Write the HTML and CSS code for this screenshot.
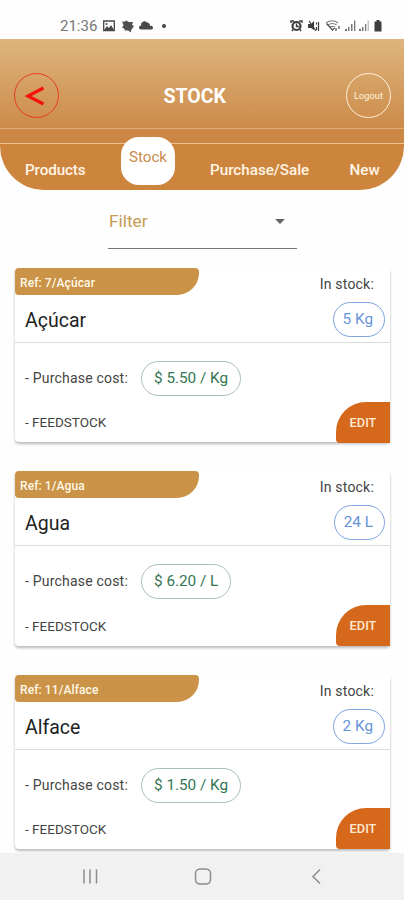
FILE: index.html
```
<!DOCTYPE html>
<html lang="en">
<head>
<meta charset="utf-8">
<title>Stock</title>
<link rel="stylesheet" href="styles.css">
</head>
<body>
<div class="status">
  <span class="time">21:36</span>
  <svg class="notif" width="56" height="14" viewBox="0 0 56 14">
    <path d="M1.700 2h10.600v9.600H1.700z" fill="none" stroke="#484848" stroke-width="1.300"/>
    <path d="M2 11l3-4 2 2 2-3 3 5z" fill="#484848"/><circle cx="4.500" cy="5" r="1" fill="#484848"/>
    <path d="M20 2l2 1 2-1.500 3 1.500 4 0-1 3 2 1-2 3-1 1 0 2.500-3-2-3 0-1-2-2-1 1.500-2z" fill="#505050"/>
    <path d="M39 10.500a2 2 0 0 1 0-4 3.500 3.500 0 0 1 6-3 3 3 0 0 1 3 3.500 1.600 1.600 0 0 1 2 3.500z" fill="#484848"/>
  </svg>
  <span class="dot"></span>
  <svg class="system" width="94" height="14" viewBox="0 0 94 14">
    <g fill="none" stroke="#3d3d3d">
      <circle cx="6.500" cy="7" r="4" stroke-width="2.200"/>
      <path d="M6.500 4.500V7.500H9M1 4V2h3M12 4V2H9M3 10.500l-1 1.500M10 10.500l1 1.500" stroke-width="1.400"/>
      <path d="M19 2l7 10M26.500 3.500v2M28.500 3v9M26.500 8v3" stroke-width="1.200"/>
      <path d="M36 4q6.500-4.500 12 0M38 6q4.500-3 8.500 0M40 8q2.500-1.500 5 0" stroke="#777" stroke-width="1.100"/>
      <path d="M36.500 4.500l6 6.500 2-2M46 9v3M49 7v3" stroke="#555" stroke-width="1.300"/>
    </g>
    <path d="M18 5h3l3-3v9l-3-2h-3z" fill="#3d3d3d"/>
    <path d="M55 10h2v2h-2zM58 8h1.500v4H58zM61 5h1.500v7H61zM64 1.500h1.300V12H64zM69 10h2v2h-2zM72 8h1.500v4H72zM75 5h1.300v7H75z" fill="#777"/>
    <path d="M77.700 1.500h1V12h-1z" fill="#aaa"/>
    <path d="M86.500 1h3v1.500h2V12.500h-7V2.500h2z" fill="#3d3d3d"/>
  </svg>
</div>
<header class="top">
  <a class="round back"><svg width="20" height="20" viewBox="0 0 20 20"><path d="M18.500 2L3 10l15.500 8" fill="none" stroke="#f41108" stroke-width="3.200"/></svg></a>
  <h1>STOCK</h1>
  <a class="round logout">Logout</a>
</header>
<div class="band"></div>
<nav class="tabs">
  <a class="products">Products</a>
  <a class="active">Stock</a>
  <a class="purchase">Purchase/Sale</a>
  <a class="new">New</a>
</nav>
<div class="filter"><span>Filter</span><i></i></div>
<main>
  <article class="card">
    <div class="head">
      <div class="name"><div class="ref">Ref: 7/Açúcar</div><h2>Açúcar</h2></div>
      <div class="stock"><div class="label">In stock:</div><div class="pill qty">5 Kg</div></div>
    </div>
    <div class="cost"><span>- Purchase cost:</span><div class="pill price">$ 5.50 / Kg</div></div>
    <div class="foot"><span>- FEEDSTOCK</span><a class="edit">EDIT</a></div>
  </article>
  <article class="card">
    <div class="head">
      <div class="name"><div class="ref">Ref: 1/Agua</div><h2>Agua</h2></div>
      <div class="stock"><div class="label">In stock:</div><div class="pill qty">24 L</div></div>
    </div>
    <div class="cost"><span>- Purchase cost:</span><div class="pill price">$ 6.20 / L</div></div>
    <div class="foot"><span>- FEEDSTOCK</span><a class="edit">EDIT</a></div>
  </article>
  <article class="card">
    <div class="head">
      <div class="name"><div class="ref">Ref: 11/Alface</div><h2>Alface</h2></div>
      <div class="stock"><div class="label">In stock:</div><div class="pill qty">2 Kg</div></div>
    </div>
    <div class="cost"><span>- Purchase cost:</span><div class="pill price">$ 1.50 / Kg</div></div>
    <div class="foot"><span>- FEEDSTOCK</span><a class="edit">EDIT</a></div>
  </article>
</main>
<footer class="system-nav">
  <svg width="404" height="47" viewBox="0 0 404 47" fill="none" stroke="#8b8b8b" stroke-width="1.500">
    <path d="M84 16.500v14M90 16.500v14M96.500 16.500v14"/>
    <rect x="195.500" y="16" width="15" height="15" rx="4.500"/>
    <path d="M320 16.500l-7 7 7 7"/>
  </svg>
</footer>
</body>
</html>
```

FILE: styles.css
```
* { box-sizing: border-box; }
body {
  margin: 0;
  width: 404px;
  height: 900px;
  overflow: hidden;
  display: flex;
  flex-direction: column;
  background: #fefefe;
  color: #444;
  font-family: Roboto, "Liberation Sans", sans-serif;
}
.status {
  height: 39px;
  flex: none;
  display: flex;
  align-items: center;
  padding: 12px 20px 0 60px;
}
.time { width: 42px; font-size: 15px; color: #777; }
.dot { width: 4px; height: 4px; margin-left: 4px; border-radius: 50%; background: #444; }
.system { margin-left: auto; }
.top {
  height: 89px;
  flex: none;
  display: flex;
  align-items: center;
  padding: 24px 13px 0 14px;
  background: linear-gradient(#deb57e, #cc8b49);
}
.round {
  width: 45px;
  height: 45px;
  border-radius: 50%;
  display: flex;
  align-items: center;
  justify-content: center;
}
.back { border: 1px solid #e63c20; }
.back svg { margin-right: 4px; }
.logout { margin-left: auto; border: 1.5px solid #fff0d8; color: #fff3df; font-size: 9.3px; }
h1 { margin: 1px 0 0 104.5px; font-size: 19.5px; font-weight: 700; color: #fff; }
.band {
  height: 16px;
  flex: none;
  border-top: 1px solid #e2ae78;
  border-bottom: 1px solid #edc394;
  background: #cd8744;
}
.tabs {
  height: 46px;
  flex: none;
  display: flex;
  border-radius: 0 0 44px 44px;
  background: #cd853e;
  color: #fff5e5;
  font-size: 15.2px;
  font-weight: 500;
  line-height: 53px;
}
.tabs a { white-space: nowrap; }
.products { width: 96px; padding-left: 25px; letter-spacing: -0.1px; }
.active {
  width: 54px;
  height: 48px;
  margin: -7px 35px 0 25px;
  border-radius: 18px;
  background: #fff;
  color: #c78b4c;
  font-weight: 400;
  text-align: center;
  line-height: 40px;
}
.purchase { width: 139.5px; }
.filter {
  width: 189px;
  height: 59px;
  flex: none;
  margin-left: 108px;
  padding: 4px 12px 0 1px;
  display: flex;
  align-items: center;
  justify-content: space-between;
  border-bottom: 1px solid #777;
  color: #c69b55;
  font-size: 17.3px;
}
.filter i { border: 5px solid transparent; border-top-color: #666; border-bottom: 0; }
main {
  flex: 1;
  min-height: 0;
  display: flex;
  flex-direction: column;
  gap: 29px;
  padding: 19px 14px 0 15px;
  overflow: hidden;
}
.card {
  height: 174.4px;
  flex: none;
  border-radius: 4px;
  background: #fff;
  box-shadow: 0 2px 3px #00000045;
}
.head {
  height: 75px;
  display: flex;
  justify-content: space-between;
  border-bottom: 1px solid #ddd;
}
.ref {
  width: 184px;
  height: 27px;
  padding-left: 5px;
  border-radius: 4px 4px 22px 4px;
  background: #ca9347;
  color: #fff8e8;
  font-size: 12px;
  font-weight: 500;
  letter-spacing: 0.1px;
  line-height: 30px;
}
h2 {
  margin: 0;
  padding-left: 10px;
  color: #222;
  font-size: 19.5px;
  font-weight: 400;
  line-height: 52px;
}
.stock { display: flex; flex-direction: column; align-items: flex-end; padding-right: 5px; }
.label { height: 34px; padding-right: 11px; font-size: 14px; letter-spacing: 0.2px; line-height: 32px; }
.pill {
  height: 35px;
  border: 1px solid;
  border-radius: 18px;
  font-size: 15.3px;
  line-height: 32px;
}
.qty { padding: 0 11px 0 9px; border-color: #7ea3df; color: #6795da; }
.cost {
  height: 59px;
  display: flex;
  align-items: center;
  padding: 12px 0 0 10px;
  font-size: 14px;
  letter-spacing: 0.2px;
}
.cost span { width: 116px; line-height: 14px; padding-bottom: 1px; }
.price { padding: 0 12px; border-color: #a9c1b4; color: #347653; letter-spacing: 0; }
.foot {
  height: 40.4px;
  display: flex;
  align-items: center;
  justify-content: space-between;
  padding-left: 10px;
  font-size: 13.5px;
}
.edit {
  width: 54px;
  height: 41px;
  border-radius: 30px 0 0 4px;
  background: #d5681b;
  color: #ffe9d4;
  font-size: 12.8px;
  font-weight: 500;
  line-height: 42px;
  text-align: center;
}
.system-nav { height: 47px; flex: none; background: #f1f1f1; }
.system-nav svg { display: block; }
```
